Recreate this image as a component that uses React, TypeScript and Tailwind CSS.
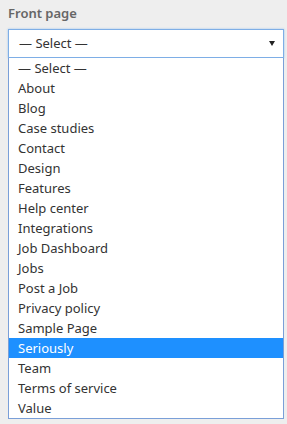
const pages = [
  "— Select —",
  "About",
  "Blog",
  "Case studies",
  "Contact",
  "Design",
  "Features",
  "Help center",
  "Integrations",
  "Job Dashboard",
  "Jobs",
  "Post a Job",
  "Privacy policy",
  "Sample Page",
  "Seriously",
  "Team",
  "Terms of service",
  "Value",
];

export default function App() {
  const selected = "Seriously";

  return (
    <div className="w-[287px] h-[424px] bg-[#eeeeee] px-2 pt-[3px] font-['Noto_Sans',sans-serif]">
      <label className="block text-[13px] font-semibold text-[#666] leading-[20px] mb-[6px]">
        Front page
      </label>

      {/* Select box */}
      <div className="w-[276px] h-[29px] bg-white border border-[#7eaee6] shadow-[0_0_2px_#9cc3f0] flex items-center justify-between pl-[10px] pr-[8px]">
        <span className="text-[13px] text-[#333]">— Select —</span>
        <span className="w-0 h-0 border-l-[3px] border-r-[3px] border-t-[5px] border-l-transparent border-r-transparent border-t-[#222]" />
      </div>

      {/* Open list */}
      <ul className="w-[276px] bg-white border border-[#7a9fd8] border-t-0">
        {pages.map((page) => (
          <li
            key={page}
            className={
              page === selected
                ? "h-5 flex items-center pt-[2px] pl-[9px] text-[13px] bg-[#1e90ff] text-white"
                : "h-5 flex items-center pt-[2px] pl-[9px] text-[13px] text-[#333]"
            }
          >
            {page}
          </li>
        ))}
      </ul>
    </div>
  );
}
